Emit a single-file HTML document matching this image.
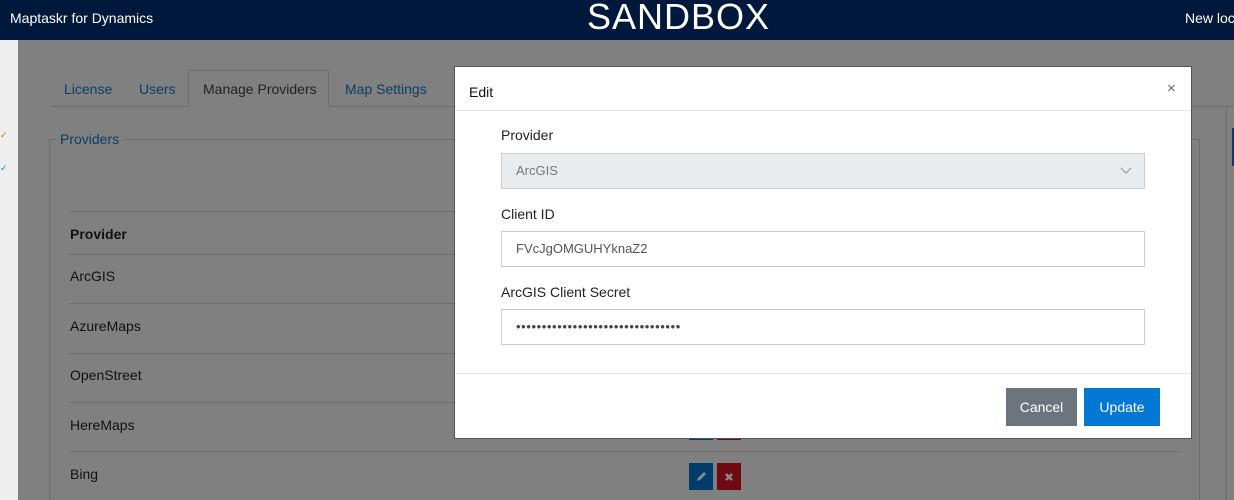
<!DOCTYPE html>
<html style="width:1234px;height:500px;overflow:hidden;background:#808080"><head><meta charset="utf-8"><style>
*{box-sizing:border-box;margin:0;padding:0}
body{width:1234px;height:500px;overflow:hidden;background:#808080;font-family:"Liberation Sans",sans-serif;position:relative}
.top{position:absolute;left:0;top:0;width:1234px;height:40px;background:#00183b;color:#fff}
.abs{position:absolute}
.side{left:0;top:40px;width:18px;height:460px;background:#eeeeee}
.tab{position:absolute;top:81px;font-size:14px;color:#0c3c66}
.line{position:absolute;height:1px;background:#6e6e6e}
.row{position:absolute;left:70px;font-size:14px;color:#111}
.modal{position:absolute;left:454px;top:66px;width:738px;height:373px;background:#fff;border:1px solid #555}
.lbl{position:absolute;left:46px;font-size:14px;color:#222}
.inp{position:absolute;left:46px;width:644px;height:36px;border:1px solid #ccc;font-size:13px;color:#555;padding:9px 14px}
</style></head><body>
<div class="top">
 <div class="abs" style="left:10px;top:10px;font-size:14px">Maptaskr for Dynamics</div>
 <div class="abs" style="left:587px;top:-4px;font-size:36px;letter-spacing:1px">SANDBOX</div>
 <div class="abs" style="left:1185px;top:10px;font-size:14px;white-space:nowrap">New loc</div>
</div>
<div class="abs side"></div>
<div class="abs" style="left:0;top:130px;font-size:9px;color:#b87a3a">✓</div>
<div class="abs" style="left:0;top:163px;font-size:9px;color:#3a6ab8">✓</div>
<div class="line" style="left:49px;top:106px;width:1185px"></div>
<div class="abs" style="left:188px;top:70px;width:141px;height:37px;border:1px solid #6e6e6e;border-bottom:1px solid #808080;background:#808080"></div>
<div class="tab" style="left:64px">License</div>
<div class="tab" style="left:139px">Users</div>
<div class="tab" style="left:203px;color:#222">Manage Providers</div>
<div class="tab" style="left:345px">Map Settings</div>
<div class="abs" style="left:49px;top:139px;width:1151px;height:361px;border:1px solid #6e6e6e;border-bottom:none"></div>
<div class="abs" style="left:56px;top:131px;padding:0 4px;background:#808080;font-size:14px;color:#0c3c66">Providers</div>
<div class="abs" style="left:1226px;top:106px;width:1px;height:394px;background:#6e6e6e"></div>
<div class="abs" style="left:1232px;top:128px;width:2px;height:38px;background:#0c3c66"></div>
<div class="line" style="left:70px;top:211px;width:1110px"></div>
<div class="row" style="top:226px;font-weight:bold">Provider</div>
<div class="line" style="left:70px;top:254px;width:1110px"></div>
<div class="row" style="top:268px">ArcGIS</div>
<div class="line" style="left:70px;top:303px;width:1110px"></div>
<div class="row" style="top:318px">AzureMaps</div>
<div class="line" style="left:70px;top:353px;width:1110px"></div>
<div class="row" style="top:367px">OpenStreet</div>
<div class="line" style="left:70px;top:402px;width:1110px"></div>
<div class="row" style="top:417px">HereMaps</div>
<div class="line" style="left:70px;top:451px;width:1110px"></div>
<div class="row" style="top:466px">Bing</div>
<div class="abs" style="left:689px;top:430px;width:24px;height:10px;background:#003d6b"></div>
<div class="abs" style="left:717px;top:430px;width:24px;height:10px;background:#6f0a12"></div>
<div class="abs" style="left:689px;top:463px;width:24px;height:27px;background:#003d6b"><svg width="24" height="27"><path d="M8 18 L9 15 L15 9 L17 11 L11 17 Z" fill="#8a8a8a"/></svg></div>
<div class="abs" style="left:717px;top:463px;width:24px;height:27px;background:#6f0a12"><svg width="24" height="27"><path d="M9 11 L15 17 M15 11 L9 17" stroke="#8a8a8a" stroke-width="2.5"/></svg></div>

<div class="modal">
 <div class="abs" style="left:14px;top:17px;font-size:14px;color:#111">Edit</div>
 <div class="abs" style="left:712px;top:13px;font-size:15px;color:#666">×</div>
 <div class="abs" style="left:0;top:43px;width:736px;height:1px;background:#e5e5e5"></div>
 <div class="lbl" style="top:60px">Provider</div>
 <div class="inp" style="top:86px;background:#e9ecef;color:#777">ArcGIS<svg class="abs" style="right:12px;top:13px" width="12" height="8"><path d="M1 1 L6 6 L11 1" stroke="#999" stroke-width="1.2" fill="none"/></svg></div>
 <div class="lbl" style="top:139px">Client ID</div>
 <div class="inp" style="top:164px">FVcJgOMGUHYknaZ2</div>
 <div class="lbl" style="top:217px">ArcGIS Client Secret</div>
 <div class="inp" style="top:242px;font-size:13px;letter-spacing:0.6px;padding-top:9px;color:#444">••••••••••••••••••••••••••••••••</div>
 <div class="abs" style="left:0;top:306px;width:736px;height:1px;background:#e5e5e5"></div>
 <div class="abs" style="left:551px;top:321px;width:71px;height:38px;background:#6c757d;color:#fff;font-size:14px;text-align:center;line-height:38px">Cancel</div>
 <div class="abs" style="left:629px;top:321px;width:76px;height:38px;background:#0078d4;color:#fff;font-size:14px;text-align:center;line-height:38px">Update</div>
</div>
</body></html>
